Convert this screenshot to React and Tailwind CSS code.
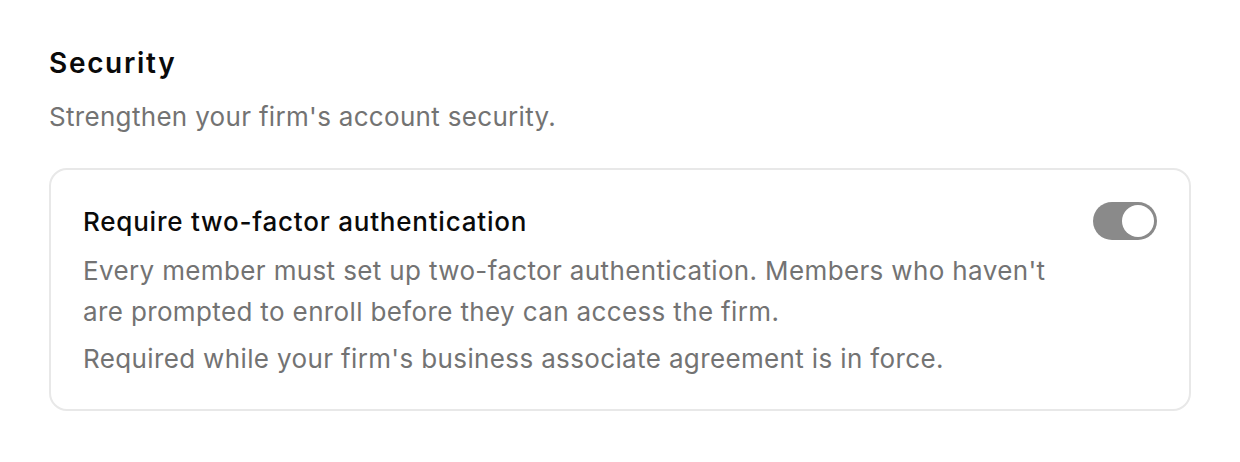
export default function App() {
	return (
		<div className="min-h-screen bg-white px-[49px] pt-[45px] font-['Inter',sans-serif] antialiased">
			<h2 className="text-[28px] font-semibold leading-[36px] tracking-[0.06em] text-[#0a0a0a]">
				Security
			</h2>
			<p className="mt-[18px] text-[26px] leading-[36px] tracking-[0.012em] text-[#737373]">
				Strengthen your firm's account security.
			</p>

			<div className="mt-[33px] w-[1142px] rounded-[18px] border-2 border-[#e8e8e8] px-[32px] pb-[30px] pt-[34px]">
				<div className="flex items-start gap-8">
					<div className="flex-1 text-[26px] tracking-[0.014em]">
						<p className="font-medium leading-[36px] tracking-[0.03em] text-[#0a0a0a]">
							Require two-factor authentication
						</p>
						<p className="mt-[10px] leading-[41px] text-[#737373]">
							Every member must set up two-factor authentication. Members who
							haven't are prompted to enroll before they can access the firm.
						</p>
						<p className="mt-[6px] leading-[41px] text-[#737373]">
							Required while your firm's business associate agreement is in
							force.
						</p>
					</div>
					<button
						type="button"
						role="switch"
						aria-checked="true"
						className="mt-[-2px] flex h-[38px] w-[64px] shrink-0 items-center justify-end rounded-full bg-[#8a8a8a] p-[3px]"
					>
						<span className="block h-[32px] w-[32px] rounded-full bg-white" />
					</button>
				</div>
			</div>
		</div>
	);
}
